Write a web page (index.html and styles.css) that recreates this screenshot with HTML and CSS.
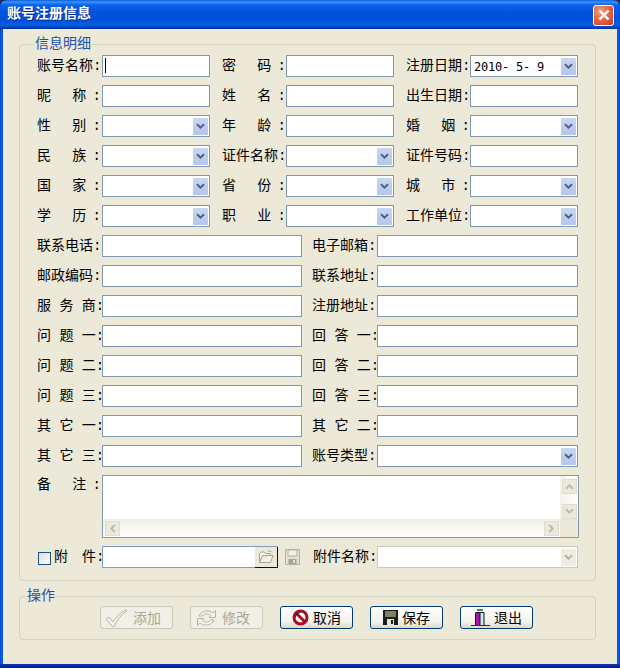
FILE: index.html
```html
<!DOCTYPE html>
<html lang="zh">
<head>
<meta charset="utf-8">
<title>账号注册信息</title>
<link rel="stylesheet" href="styles.css">
</head>
<body>
<svg class="defs" width="0" height="0" aria-hidden="true">
  <symbol id="chev" viewBox="0 0 9 7"><path d="M1 1.2 4.5 4.7 8 1.2" fill="none" stroke="currentColor" stroke-width="2"/></symbol>
</svg>
<div class="window">
  <header class="titlebar">
    <span class="title">账号注册信息</span>
    <span class="close"><svg width="12" height="12" viewBox="0 0 12 12"><path d="M1.5 1.5 10.5 10.5M10.5 1.5 1.5 10.5" stroke="#fff" stroke-width="2.4" fill="none"/></svg></span>
  </header>
  <main class="client">
    <fieldset class="group details">
      <legend>信息明细</legend>
      <div class="row six">
        <label class="lab">账号名称:</label><div class="field"><input class="input" type="text"><i class="caret"></i></div>
        <label class="lab j">密 码:</label><input class="input" type="text">
        <label class="lab">注册日期:</label><div class="combo"><span class="val">2010- 5- 9</span><span class="drop"><svg width="9" height="7"><use href="#chev"/></svg></span></div>
      </div>
      <div class="row six">
        <label class="lab j">昵 称:</label><input class="input" type="text">
        <label class="lab j">姓 名:</label><input class="input" type="text">
        <label class="lab">出生日期:</label><input class="input" type="text">
      </div>
      <div class="row six">
        <label class="lab j">性 别:</label><div class="combo"><span class="drop"><svg width="9" height="7"><use href="#chev"/></svg></span></div>
        <label class="lab j">年 龄:</label><input class="input" type="text">
        <label class="lab j">婚 姻:</label><div class="combo"><span class="drop"><svg width="9" height="7"><use href="#chev"/></svg></span></div>
      </div>
      <div class="row six">
        <label class="lab j">民 族:</label><div class="combo"><span class="drop"><svg width="9" height="7"><use href="#chev"/></svg></span></div>
        <label class="lab">证件名称:</label><div class="combo"><span class="drop"><svg width="9" height="7"><use href="#chev"/></svg></span></div>
        <label class="lab">证件号码:</label><input class="input" type="text">
      </div>
      <div class="row six">
        <label class="lab j">国 家:</label><div class="combo"><span class="drop"><svg width="9" height="7"><use href="#chev"/></svg></span></div>
        <label class="lab j">省 份:</label><div class="combo"><span class="drop"><svg width="9" height="7"><use href="#chev"/></svg></span></div>
        <label class="lab j">城 市:</label><div class="combo"><span class="drop"><svg width="9" height="7"><use href="#chev"/></svg></span></div>
      </div>
      <div class="row six">
        <label class="lab j">学 历:</label><div class="combo"><span class="drop"><svg width="9" height="7"><use href="#chev"/></svg></span></div>
        <label class="lab j">职 业:</label><div class="combo"><span class="drop"><svg width="9" height="7"><use href="#chev"/></svg></span></div>
        <label class="lab">工作单位:</label><div class="combo"><span class="drop"><svg width="9" height="7"><use href="#chev"/></svg></span></div>
      </div>
      <div class="row four"><label class="lab">联系电话:</label><input class="input" type="text"><label class="lab">电子邮箱:</label><input class="input" type="text"></div>
      <div class="row four"><label class="lab">邮政编码:</label><input class="input" type="text"><label class="lab">联系地址:</label><input class="input" type="text"></div>
      <div class="row four"><label class="lab j">服 务 商:</label><input class="input" type="text"><label class="lab">注册地址:</label><input class="input" type="text"></div>
      <div class="row four"><label class="lab j">问 题 一:</label><input class="input" type="text"><label class="lab j">回 答 一:</label><input class="input" type="text"></div>
      <div class="row four"><label class="lab j">问 题 二:</label><input class="input" type="text"><label class="lab j">回 答 二:</label><input class="input" type="text"></div>
      <div class="row four"><label class="lab j">问 题 三:</label><input class="input" type="text"><label class="lab j">回 答 三:</label><input class="input" type="text"></div>
      <div class="row four"><label class="lab j">其 它 一:</label><input class="input" type="text"><label class="lab j">其 它 二:</label><input class="input" type="text"></div>
      <div class="row four"><label class="lab j">其 它 三:</label><input class="input" type="text"><label class="lab">账号类型:</label><div class="combo"><span class="drop"><svg width="9" height="7"><use href="#chev"/></svg></span></div></div>
      <div class="row memo-row">
        <label class="lab j memo-lab">备 注:</label>
        <div class="memo">
          <div class="memo-main">
            <div class="memo-text"></div>
            <div class="vbar">
              <span class="sbtn"><svg width="9" height="7"><use class="up" href="#chev"/></svg></span>
              <span class="sbtn"><svg width="9" height="7"><use href="#chev"/></svg></span>
            </div>
          </div>
          <div class="hbar">
            <span class="sbtn"><svg class="left" width="9" height="7"><use href="#chev"/></svg></span>
            <span class="sbtn"><svg class="right" width="9" height="7"><use href="#chev"/></svg></span>
            <span class="corner"></span>
          </div>
        </div>
      </div>
      <div class="row attach">
        <div class="attach-lab"><span class="check"></span><span>附</span><span>件:</span></div>
        <div class="file">
          <span class="browse"><svg width="16" height="14" viewBox="0 0 16 14"><path d="M1.5 12.5V3.5L3 2H6L7.5 3.5H12V5.5M1.5 12.5H12.5L15 5.5H4.5L1.5 12.5Z" fill="#f4f2e8" stroke="#a9a797"/><path d="M10 1.5C11 .8 13 .8 14 2.5" fill="none" stroke="#a9a797"/></svg></span>
        </div>
        <svg class="disk-off" width="15" height="16" viewBox="0 0 15 16"><path d="M.5.5H14.5V15.5H.5Z" fill="#e4e1d2" stroke="#b2b0a2"/><path d="M3 1H12V7H3Z" fill="#f2f0e6" stroke="#b2b0a2"/><path d="M3.5 10H11.5V15H3.5Z" fill="#a5a395"/><path d="M8 11H10V14H8Z" fill="#e4e1d2"/></svg>
        <label class="lab attach-name">附件名称:</label>
        <div class="combo off"><span class="drop"><svg width="9" height="7"><use href="#chev"/></svg></span></div>
      </div>
    </fieldset>
    <fieldset class="group actions">
      <legend>操作</legend>
      <div class="buttons">
        <button class="btn" disabled type="button"><svg width="25" height="20" viewBox="0 0 25 20"><path d="M2 11 5 9 9 14C12 9 17 4.500 22 1.500L23 2.500C17 7 13 12 10 18.500H8.500Z" fill="#f6f4ea" stroke="#b5b3a4"/></svg><span class="cap">添加</span></button>
        <button class="btn" disabled type="button"><svg width="23" height="20" viewBox="0 0 23 20"><path d="M4 8C6 2.500 14 1.500 18 5L20.500 2.500V9.500H14L16 7.500C13 5 9 5.500 7.500 8ZM19 12C17 17.500 9 18.500 5 15L2.500 17.500V10.500H9L7 12.500C10 15 14 14.500 15.500 12Z" fill="#f6f4ea" stroke="#b5b3a4"/></svg><span class="cap">修改</span></button>
        <button class="btn" type="button"><svg width="17" height="17" viewBox="0 0 17 17"><circle cx="8.500" cy="8.500" r="6.500" fill="#fff" stroke="#a10f23" stroke-width="3"/><path d="M4 4 13 13" stroke="#a10f23" stroke-width="3"/><path d="M3.500 8.500A5 5 0 0 1 8.500 3.500" fill="none" stroke="#111" stroke-width=".8"/></svg><span class="cap">取消</span></button>
        <button class="btn" type="button"><svg width="15" height="15" viewBox="0 0 15 15"><path d="M0 0H15V15H0Z" fill="#1d1d16"/><path d="M2 1H13V7H2Z" fill="#7c8263"/><path d="M4 9H11V15H4Z" fill="#e2e2d6"/><path d="M8 10H10V14H8Z" fill="#1d1d16"/></svg><span class="cap">保存</span></button>
        <button class="btn" type="button"><svg width="19" height="19" viewBox="0 0 19 19"><path d="M0 17.500H19" stroke="#1a1ad0"/><path d="M6 1H12V3H6Z" fill="#3f8f3f"/><path d="M5 4H13V5H5Z" fill="#111"/><path d="M5 5H9V17H5Z" fill="#b010b0"/><path d="M9 5H13V17H9Z" fill="#c8f0f4"/><path d="M4.500 4.500V17M9 4.500V17M13 4.500V17" stroke="#111" fill="none"/></svg><span class="cap">退出</span></button>
      </div>
    </fieldset>
  </main>
</div>
</body>
</html>
```
FILE: styles.css
```css
* { box-sizing: border-box; }
html, body { margin: 0; padding: 0; background: #1c2a5a; }
body { width: 620px; height: 668px; overflow: hidden; font: 14px/22px "Liberation Mono", "Noto Sans CJK SC", sans-serif; color: #000; }
.defs { position: absolute; }
.window {
  width: 620px; height: 668px; display: flex; flex-direction: column;
  border-radius: 7px 7px 0 0; overflow: hidden;
  background: linear-gradient(90deg, #0a50d8 0, #0a5ae6 3px, transparent 3px, transparent 617px, #0a5ae6 617px, #0a50d8 620px);
  padding: 0 3px 4px;
  position: relative;
}
.window::after { content: ""; position: absolute; left: 0; right: 0; bottom: 0; height: 4px; background: linear-gradient(#0d37b0, #041c82); }
.titlebar {
  flex: none; height: 29px; margin: 0 -3px; padding: 0 6px 0 7px;
  display: flex; align-items: center; justify-content: space-between;
  background: linear-gradient(#0a5fdc 0, #3a93ff 2px, #0a62ea 5px, #0453dd 12px, #0250d8 20px, #0a5ee6 25px, #003bb0 28px, #002f94 29px);
}
.title { color: #fff; font-weight: 700; font-size: 14px; line-height: 16px; margin-bottom: 2px; text-shadow: 1px 1px 0 #0a2a8c; }
.close {
  width: 21px; height: 21px; border: 1px solid #fff; border-radius: 3px; margin-top: 1px;
  display: flex; align-items: center; justify-content: center;
  background: radial-gradient(circle at 35% 30%, #f0a080, #e0593a 60%, #c23a20);
}
.client { flex: 1; min-height: 0; background: #ece9d8; padding: 7px 21px 0 16px; }
.group { margin: 0; min-width: 0; border: 1px solid #d4d1c0; border-radius: 4px; }
.group legend { font-size: 14px; line-height: 16px; color: #1f4fa8; }
.details { height: 545px; padding: 3px 0 0; }
.details legend { padding: 0 1px; margin-left: 14px; }
.actions { height: 52px; margin-top: 7px; padding: 2px 0 0; }
.actions legend { margin-left: 7px; padding: 0; }
.row { display: grid; align-items: center; height: 22px; margin: 0 17px 8px; }
.six { grid-template-columns: 65px 108px 76px 108px 76px 108px; }
.four { grid-template-columns: 65px 200px 75px 201px; }
.lab { display: block; white-space: nowrap; line-height: 20px; width: 64px; margin-bottom: 1px; }
.six .lab:not(:first-child) { margin-left: 12px; }
.four .lab:not(:first-child) { margin-left: 10px; }
.j { text-align-last: justify; }
.input { display: block; width: 100%; height: 22px; margin: 0; padding: 0 3px; border: 1px solid #8299ad; background: #fff; outline: 0; }
.field { position: relative; height: 22px; }
.caret { position: absolute; left: 3px; top: 3px; width: 1px; height: 15px; background: #000; }
.combo { height: 22px; border: 1px solid #8299ad; background: #fff; display: flex; align-items: center; justify-content: flex-end; padding-right: 1px; }
.val { flex: 1; padding: 1px 0 0 3px; font: 12px/20px "DejaVu Sans Mono", monospace; letter-spacing: -.22px; white-space: pre; }
.drop { width: 15px; height: 17px; display: flex; align-items: center; justify-content: center; color: #4d6185; background: linear-gradient(#c8d6f0, #b4c6ec); border-radius: 1px; }
.off { border-color: #c9c7ba; }
.off .drop { background: #eeecdf; color: #b4b2a3; }
.memo-row { grid-template-columns: 65px 477px; height: 63px; align-items: start; }
.memo-lab { margin-top: 0; }
.memo { height: 63px; border: 1px solid #8299ad; background: #fff; display: flex; flex-direction: column; }
.memo-main { flex: 1; display: flex; min-height: 0; }
.memo-text { flex: 1; }
.vbar { width: 18px; padding: 3px 1px 0 2px; display: flex; flex-direction: column; gap: 10px; background: linear-gradient(90deg, #f4f2e8, #fff); }
.sbtn { width: 15px; height: 15px; display: flex; align-items: center; justify-content: center; flex: none; background: #ebe9dc; border: 1px solid #dfddd0; color: #bcbaab; }
.vbar .sbtn:first-child svg { transform: rotate(180deg); }
.hbar { flex: none; height: 18px; display: flex; align-items: center; padding-left: 2px; background: linear-gradient(#f0eee3, #fff); }
.hbar .sbtn:nth-child(2) { margin-left: auto; margin-right: 1px; }
.left { transform: rotate(90deg); }
.right { transform: rotate(-90deg); }
.corner { width: 18px; height: 18px; background: #ece9d8; }
.attach { display: flex; margin-top: 1px; margin-bottom: 0; }
.attach-lab { width: 64px; margin-left: 1px; flex: none; display: flex; align-items: center; line-height: 22px; }
.attach-lab span:nth-child(2) { margin-left: 3px; margin-right: 14px; }
.check { width: 13px; height: 13px; flex: none; margin-top: 2px; border: 1px solid #1c5180; background: linear-gradient(135deg, #dcdcd7, #fff); }
.file { width: 176px; height: 22px; flex: none; border: 1px solid #7f9db9; background: #fff; display: flex; justify-content: flex-end; }
.browse { width: 23px; height: 21px; margin-right: -1px; display: flex; align-items: center; justify-content: center; background: #ece9d8; border-right: 1px solid #111; border-bottom: 1px solid #111; }
.disk-off { margin-left: 7px; flex: none; }
.attach-name { margin-left: 13px; width: 64px; flex: none; }
.attach .combo { width: 201px; }
.buttons { display: flex; gap: 17px; margin-left: 80px; }
.btn {
  width: 73px; height: 23px; padding: 0; display: flex; align-items: center; justify-content: center; gap: 4px;
  font: 14px/20px "Noto Sans CJK SC", sans-serif; color: #000;
  border: 1px solid #003c74; border-radius: 3px;
  background: linear-gradient(#fff, #f4f2ea 70%, #dcd8c8);
}
.btn:disabled { border-color: #cac8bb; background: #f2f0e6; color: #a8a695; }
.btn:disabled svg { margin-left: -8px; }
.cap { margin-bottom: 2px; }
```
